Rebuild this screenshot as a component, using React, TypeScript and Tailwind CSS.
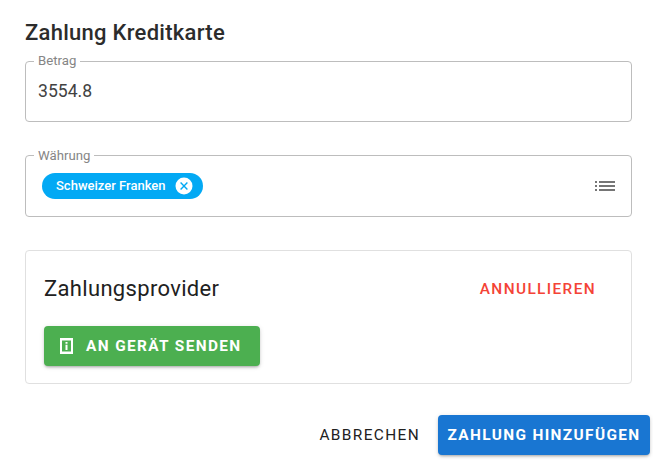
export default function App() {
  return (
    <div className="flex h-[460px] w-[653px] flex-col overflow-hidden bg-white font-['Roboto',sans-serif] text-[#212121]">
      <div className="pr-[21px] pl-[25px] pt-[18px]">
        <h2 className="h-[29px] text-[22px] leading-[29px] font-medium tracking-[0.275px] text-[#2c2c2c]">
          Zahlung Kreditkarte
        </h2>

        <fieldset className="mt-[7px] h-[68px] rounded border border-[#bdbdbd] pr-3 pl-[8px]">
          <legend className="px-[4px] text-[13.2px] leading-[14px] text-[#858585]">Betrag</legend>
          <div className="pl-[4px] pt-[11px] text-[17.6px] leading-[24px] text-[#424242]">3554.8</div>
        </fieldset>

        <fieldset className="mt-[26px] h-[69px] rounded border border-[#bdbdbd] pr-[15px] pl-[8px]">
          <legend className="px-[4px] pt-[1px] text-[13.2px] leading-[14px] text-[#858585]">Währung</legend>
          <div className="flex items-center justify-between pt-[10px]">
            <span className="ml-[8px] flex h-[26px] w-[161px] items-center justify-between rounded-full bg-[#03a9f4] pr-[10px] pl-[14px] text-[13px] font-medium text-white">
              Schweizer Franken
              <svg className="h-[18px] w-[18px]" viewBox="0 0 18 18" aria-hidden>
                <circle cx="9" cy="9" r="8.5" fill="#fff" />
                <path d="M5.6 5.6l6.8 6.8M12.4 5.6l-6.8 6.8" stroke="#03a9f4" strokeWidth="1.4" fill="none" />
              </svg>
            </span>
            <svg className="h-[12px] w-[22px]" viewBox="0 0 22 12" fill="#757575" aria-hidden>
              <rect x="1" y="1" width="2" height="2" />
              <rect x="5" y="1" width="16" height="2" />
              <rect x="1" y="5" width="2" height="2" />
              <rect x="5" y="5" width="16" height="2" />
              <rect x="1" y="9" width="2" height="2" />
              <rect x="5" y="9" width="16" height="2" />
            </svg>
          </div>
        </fieldset>

        <section className="mt-[33px] h-[134px] rounded border border-[#e0e0e0] px-[18px]">
          <div className="flex h-[75px] items-center justify-between">
            <h3 className="text-[22px] tracking-[0.33px] text-[#212121]">Zahlungsprovider</h3>
            <button
              type="button"
              className="mt-[3px] mr-[17px] text-[15.4px] font-medium tracking-[1.375px] text-[#f44336] uppercase"
            >
              Annullieren
            </button>
          </div>
          <button
            type="button"
            className="flex h-[40px] w-[216px] items-center rounded bg-[#4caf50] pt-[2px] pl-[16px] text-[15.4px] font-bold tracking-[1.375px] text-white uppercase shadow-[0_2px_3px_-1px_rgba(0,0,0,0.3),0_1px_5px_0_rgba(0,0,0,0.12)]"
          >
            <svg className="mr-[13px] -mt-[2px] h-[16px] w-[13px]" viewBox="0 0 13 16" aria-hidden>
              <path
                fillRule="evenodd"
                d="M0 0h13v16H0zM2 2.5v11h9v-11zM5.5 4h2v1.8h-2zM5.5 6.8h2V12h-2z"
                fill="#fff"
              />
            </svg>
            An Gerät senden
          </button>
        </section>
      </div>

      <div className="mt-[31px] flex items-center justify-end pr-[3px]">
        <button
          type="button"
          className="mr-[18px] pt-[2px] text-[15.4px] font-normal tracking-[1.375px] text-[#212121] uppercase"
        >
          Abbrechen
        </button>
        <button
          type="button"
          className="flex h-[40px] w-[212px] items-center justify-center rounded bg-[#1976d2] pt-[2px] text-[15.4px] font-bold tracking-[1.375px] text-white uppercase shadow-[0_2px_3px_-1px_rgba(0,0,0,0.3),0_1px_5px_0_rgba(0,0,0,0.12)]"
        >
          Zahlung hinzufügen
        </button>
      </div>
    </div>
  );
}
